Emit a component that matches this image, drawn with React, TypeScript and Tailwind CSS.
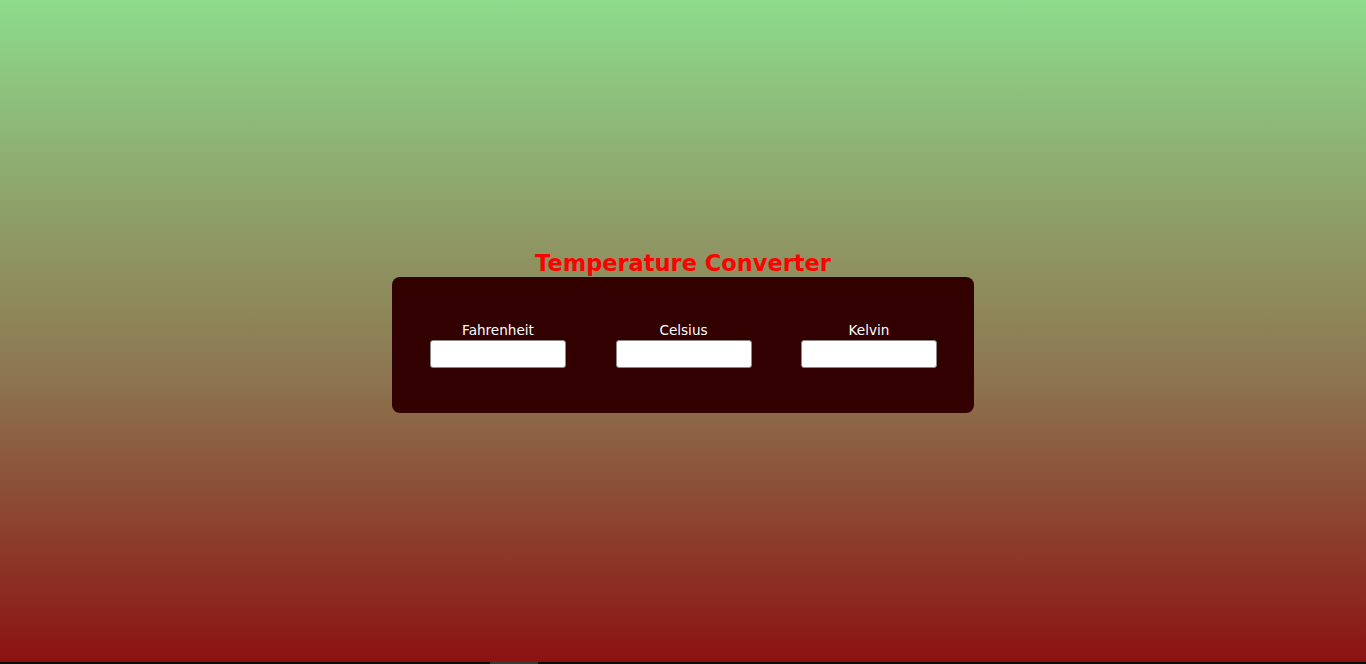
export default function App() {
  const fields = ["Fahrenheit", "Celsius", "Kelvin"];
  return (
    <div className="w-full h-[664px] flex flex-col overflow-hidden">
      <div className="h-[662px] w-full flex flex-col items-center justify-center bg-[linear-gradient(to_bottom,#8cdc8c_0%,#8f9a66_35%,#8d7a52_55%,#8c1212_100%)]">
        <h1 className="text-[22.5px] leading-[26px] font-bold text-[#ff0000] font-['DejaVu_Sans',Verdana,sans-serif]">
          Temperature Converter
        </h1>
        <div className="w-[582px] h-[136px] mt-[1px] bg-[#330000] rounded-[8px] flex items-center pl-[38px] gap-[49.5px]">
          {fields.map((f) => (
            <div key={f} className="flex flex-col items-center w-[136px]">
              <label className="text-[13.6px] leading-[17px] text-white font-['DejaVu_Sans',Verdana,sans-serif] mb-[1px]">
                {f}
              </label>
              <input
                type="text"
                className="w-[136px] h-[28px] bg-white border border-[#8a8a8a] rounded-[3px] outline-none"
              />
            </div>
          ))}
        </div>
      </div>
      <div className="h-[2px] w-full bg-[#0c0c0c] flex">
        <div className="ml-[490px] w-[48px] h-[2px] bg-[#3a3a3a]" />
      </div>
    </div>
  );
}
